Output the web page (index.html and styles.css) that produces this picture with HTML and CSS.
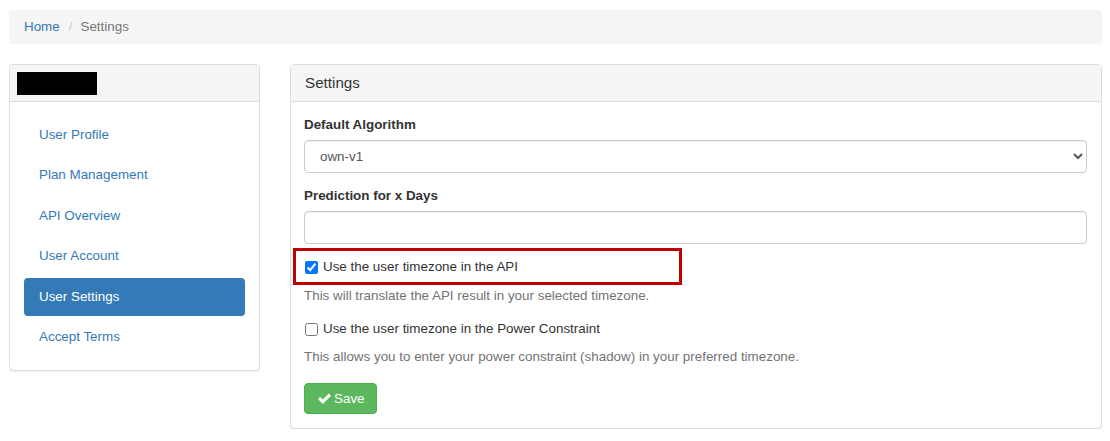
FILE: index.html
```html
<!DOCTYPE html>
<html lang="en">
<head>
<meta charset="utf-8">
<title>Settings</title>
<link rel="stylesheet" href="styles.css">
</head>
<body>
<div class="page">
  <ol class="breadcrumb">
    <li><a href="#">Home</a></li>
    <li class="sep">/</li>
    <li class="current">Settings</li>
  </ol>
  <div class="layout">
    <aside class="panel side">
      <div class="panel-heading side-heading"><span class="redacted"></span></div>
      <ul class="nav-pills">
        <li><a href="#">User Profile</a></li>
        <li><a href="#">Plan Management</a></li>
        <li><a href="#">API Overview</a></li>
        <li><a href="#">User Account</a></li>
        <li class="active"><a href="#">User Settings</a></li>
        <li><a href="#">Accept Terms</a></li>
      </ul>
    </aside>
    <section class="panel main">
      <div class="panel-heading"><h3 class="panel-title">Settings</h3></div>
      <div class="panel-body">
        <div class="form-group">
          <label class="control-label">Default Algorithm</label>
          <select class="form-control select">
            <option>own-v1</option>
          </select>
        </div>
        <div class="form-group">
          <label class="control-label">Prediction for x Days</label>
          <input class="form-control" type="text">
        </div>
        <div class="checkbox first">
          <label><input type="checkbox" checked> Use the user timezone in the API</label>
          <span class="highlight"></span>
        </div>
        <p class="help-block first-help">This will translate the API result in your selected timezone.</p>
        <div class="checkbox second">
          <label><input type="checkbox"> Use the user timezone in the Power Constraint</label>
        </div>
        <p class="help-block second-help">This allows you to enter your power constraint (shadow) in your preferred timezone.</p>
        <button class="btn-success" type="button">
          <svg class="check" viewBox="0 0 16 14" width="15" height="13" aria-hidden="true"><path d="M1 7.6 L3.3 5.3 L6.2 8.2 L12.7 1.7 L15 4 L6.2 12.8 Z" fill="#fff"/></svg>Save
        </button>
      </div>
    </section>
  </div>
</div>
</body>
</html>
```
FILE: styles.css
```css
* { box-sizing: border-box; }
html, body { margin: 0; padding: 0; background: #fff; }
body {
  font-family: "Liberation Sans", Arial, Helvetica, sans-serif;
  font-size: 13.4px;
  line-height: 20px;
  color: #333;
}
a { color: #337ab7; text-decoration: none; }

.page { padding: 10px 8px 0 9px; }

.breadcrumb {
  list-style: none;
  margin: 0 0 20px 0;
  padding: 7px 15px;
  height: 34px;
  background: #f5f5f5;
  border-radius: 4px;
  display: flex;
  align-items: center;
}
.breadcrumb li { display: block; }
.breadcrumb .sep { color: #ccc; padding: 0 8px 0 9px; }
.breadcrumb .current { color: #777; }

.layout {
  display: grid;
  grid-template-columns: 251px 1fr;
  column-gap: 30px;
  align-items: start;
}

.panel {
  background: #fff;
  border: 1px solid #ddd;
  border-radius: 4px;
  box-shadow: 0 1px 1px rgba(0,0,0,.05);
}
.panel-heading {
  background: #f5f5f5;
  border-bottom: 1px solid #ddd;
  border-radius: 3px 3px 0 0;
  height: 37px;
  padding: 0 14px;
  display: flex;
  align-items: center;
}
.side-heading { padding: 0 7px; }
.redacted { display: block; width: 80px; height: 23px; background: #000; }
.panel-title { margin: 0; font-size: 15.2px; font-weight: normal; color: #333; }

.nav-pills {
  list-style: none;
  margin: 0;
  padding: 14px;
  display: flex;
  flex-direction: column;
  gap: 2.4px;
}
.nav-pills li a {
  display: block;
  height: 38px;
  line-height: 38px;
  padding: 0 15px;
  border-radius: 4px;
}
.nav-pills li.active a { background: #337ab7; color: #fff; }

.panel-body { padding: 13px 14px 14px 13px; }

.form-group { margin-bottom: 13px; }
.control-label {
  display: block;
  font-weight: bold;
  margin-bottom: 5px;
}
.form-control {
  display: block;
  width: 100%;
  height: 33px;
  padding: 6px 12px;
  font-family: inherit;
  font-size: 13.4px;
  color: #555;
  background: #fff;
  border: 1px solid #ccc;
  border-radius: 4px;
  box-shadow: inset 0 1px 1px rgba(0,0,0,.075);
}
.form-control.select { padding: 6px 12px 6px 11px; }

.checkbox { position: relative; height: 20px; }
.checkbox label { display: flex; align-items: center; cursor: pointer; }
.checkbox input { width: 13px; height: 13px; margin: 0 5px 0 1px; }
.checkbox.first { margin-top: 12px; }
.checkbox.second { margin-top: 13px; }

.highlight {
  position: absolute;
  left: -11px;
  top: -9px;
  width: 389px;
  height: 37px;
  border: 3px solid #c00000;
  pointer-events: none;
}

.help-block { margin: 0; color: #737373; }
.first-help { margin-top: 9px; }
.second-help { margin-top: 8px; }

.btn-success {
  margin-top: 16px;
  display: inline-flex;
  align-items: center;
  height: 31px;
  padding: 0 11px 0 12px;
  font-family: inherit;
  font-size: 13.4px;
  color: #fff;
  background: #5cb85c;
  border: 1px solid #4cae4c;
  border-radius: 4px;
}
.check { margin-right: 2px; }
```
